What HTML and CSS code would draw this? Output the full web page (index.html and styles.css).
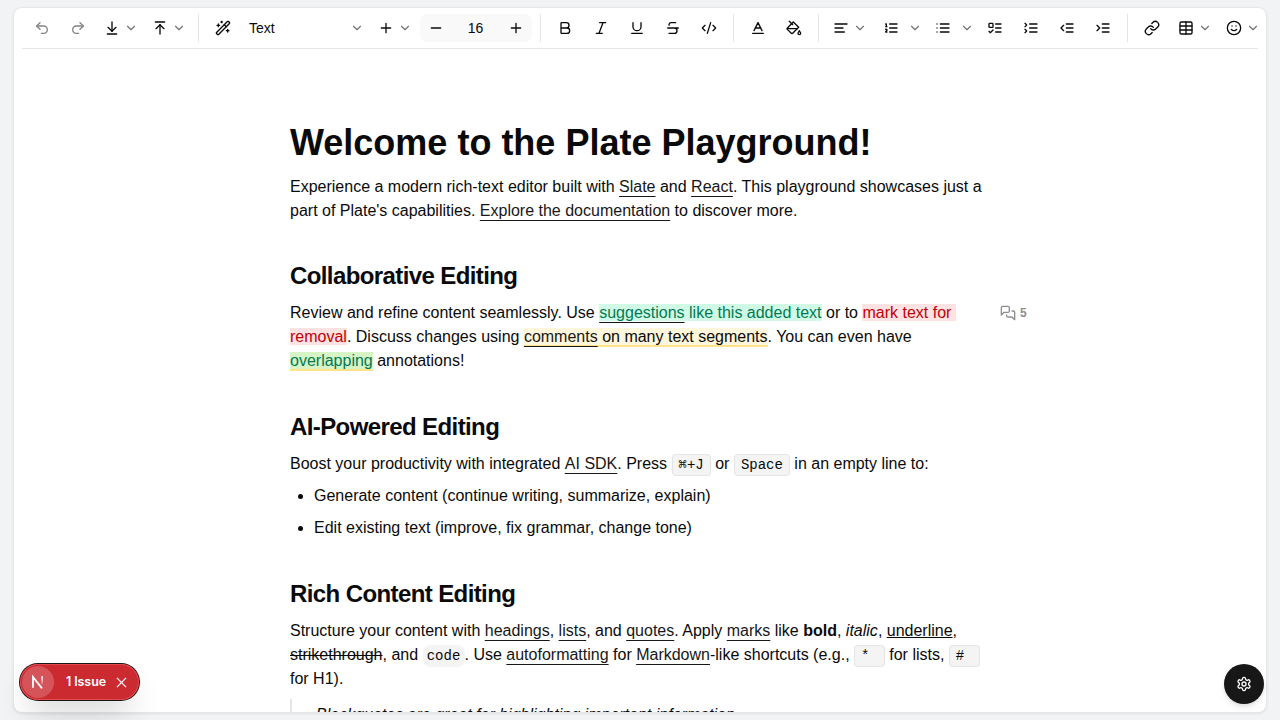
FILE: index.html
```
<!DOCTYPE html>
<html lang="en">
<head>
<meta charset="utf-8">
<title>Plate Playground</title>
<link rel="stylesheet" href="styles.css">
</head>
<body>
<svg class="sprite" aria-hidden="true">
  <symbol id="undo" viewBox="0 0 24 24"><path d="M9 14 4 9l5-5"/><path d="M4 9h10.5a5.5 5.5 0 0 1 0 11H11"/></symbol>
  <symbol id="redo" viewBox="0 0 24 24"><path d="m15 14 5-5-5-5"/><path d="M20 9H9.5a5.5 5.5 0 0 0 0 11H13"/></symbol>
  <symbol id="down-line" viewBox="0 0 24 24"><path d="M12 17V3"/><path d="m6 11 6 6 6-6"/><path d="M19 21H5"/></symbol>
  <symbol id="up-line" viewBox="0 0 24 24"><path d="M5 3h14"/><path d="m18 13-6-6-6 6"/><path d="M12 7v14"/></symbol>
  <symbol id="chevron" viewBox="0 0 24 24"><path d="m6 9 6 6 6-6"/></symbol>
  <symbol id="wand" viewBox="0 0 24 24"><path d="m21.64 3.64-1.28-1.28a1.21 1.21 0 0 0-1.72 0L2.36 18.64a1.21 1.21 0 0 0 0 1.72l1.28 1.28a1.2 1.2 0 0 0 1.72 0L21.64 5.36a1.2 1.2 0 0 0 0-1.72"/><path d="m14 7 3 3M5 6v4M19 14v4M10 2v2M7 8H3M21 16h-4M11 3H9"/></symbol>
  <symbol id="plus" viewBox="0 0 24 24"><path d="M5 12h14M12 5v14"/></symbol>
  <symbol id="minus" viewBox="0 0 24 24"><path d="M5 12h14"/></symbol>
  <symbol id="bold" viewBox="0 0 24 24"><path d="M6 12h9a4 4 0 0 1 0 8H7a1 1 0 0 1-1-1V5a1 1 0 0 1 1-1h7a4 4 0 0 1 0 8"/></symbol>
  <symbol id="italic" viewBox="0 0 24 24"><path d="M19 4h-9M14 20H5M15 4 9 20"/></symbol>
  <symbol id="underline" viewBox="0 0 24 24"><path d="M6 4v6a6 6 0 0 0 12 0V4M4 20h16"/></symbol>
  <symbol id="strike" viewBox="0 0 24 24"><path d="M16 4H9a3 3 0 0 0-2.83 4"/><path d="M14 12a4 4 0 0 1 0 8H6M4 12h16"/></symbol>
  <symbol id="code" viewBox="0 0 24 24"><path d="m18 16 4-4-4-4M6 8l-4 4 4 4M14.5 4l-5 16"/></symbol>
  <symbol id="baseline" viewBox="0 0 24 24"><path d="M4 20h16M6 16l6-12 6 12M8 12h8"/></symbol>
  <symbol id="bucket" viewBox="0 0 24 24"><path d="m19 11-8-8-8.6 8.6a2 2 0 0 0 0 2.8l5.2 5.2c.8.8 2 .8 2.8 0L19 11Z"/><path d="m5 2 5 5M2 13h15"/><path d="M22 20a2 2 0 1 1-4 0c0-1.6 1.7-2.4 2-4 .3 1.6 2 2.4 2 4Z"/></symbol>
  <symbol id="align" viewBox="0 0 24 24"><path d="M15 12H3M17 18H3M21 6H3"/></symbol>
  <symbol id="ordered" viewBox="0 0 24 24"><path d="M10 12h11M10 18h11M10 6h11M4 10h2M4 6h1v4M6 18H4c0-1 2-2 2-3s-1-1.5-2-1"/></symbol>
  <symbol id="list" viewBox="0 0 24 24"><path d="M3 12h.01M3 18h.01M3 6h.01M8 12h13M8 18h13M8 6h13"/></symbol>
  <symbol id="todo" viewBox="0 0 24 24"><rect x="3" y="5" width="6" height="6" rx="1"/><path d="m3 17 2 2 4-4M13 6h8M13 12h8M13 18h8"/></symbol>
  <symbol id="collapse" viewBox="0 0 24 24"><path d="m3 10 2.5-2.5L3 5M3 19l2.5-2.5L3 14M10 6h11M10 12h11M10 18h11"/></symbol>
  <symbol id="outdent" viewBox="0 0 24 24"><path d="M21 12H11M21 18H11M21 6H11M7 8l-4 4 4 4"/></symbol>
  <symbol id="indent" viewBox="0 0 24 24"><path d="M21 12H11M21 18H11M21 6H11M3 8l4 4-4 4"/></symbol>
  <symbol id="link" viewBox="0 0 24 24"><path d="M10 13a5 5 0 0 0 7.54.54l3-3a5 5 0 0 0-7.07-7.07l-1.72 1.71"/><path d="M14 11a5 5 0 0 0-7.54-.54l-3 3a5 5 0 0 0 7.07 7.07l1.71-1.71"/></symbol>
  <symbol id="table" viewBox="0 0 24 24"><path d="M12 3v18"/><rect x="3" y="3" width="18" height="18" rx="2"/><path d="M3 9h18M3 15h18"/></symbol>
  <symbol id="smile" viewBox="0 0 24 24"><circle cx="12" cy="12" r="10"/><path d="M8 14s1.5 2 4 2 4-2 4-2M9 9h.01M15 9h.01"/></symbol>
  <symbol id="messages" viewBox="0 0 24 24"><path d="M14 9a2 2 0 0 1-2 2H6l-4 4V4a2 2 0 0 1 2-2h8a2 2 0 0 1 2 2z"/><path d="M18 9h2a2 2 0 0 1 2 2v11l-4-4h-6a2 2 0 0 1-2-2v-1"/></symbol>
  <symbol id="settings" viewBox="0 0 24 24"><path d="M12.22 2h-.44a2 2 0 0 0-2 2v.18a2 2 0 0 1-1 1.73l-.43.25a2 2 0 0 1-2 0l-.15-.08a2 2 0 0 0-2.73.73l-.22.38a2 2 0 0 0 .73 2.73l.15.1a2 2 0 0 1 1 1.72v.51a2 2 0 0 1-1 1.74l-.15.09a2 2 0 0 0-.73 2.73l.22.38a2 2 0 0 0 2.73.73l.15-.08a2 2 0 0 1 2 0l.43.25a2 2 0 0 1 1 1.73V20a2 2 0 0 0 2 2h.44a2 2 0 0 0 2-2v-.18a2 2 0 0 1 1-1.73l.43-.25a2 2 0 0 1 2 0l.15.08a2 2 0 0 0 2.73-.73l.22-.39a2 2 0 0 0-.73-2.73l-.15-.08a2 2 0 0 1-1-1.74v-.5a2 2 0 0 1 1-1.74l.15-.09a2 2 0 0 0 .73-2.73l-.22-.38a2 2 0 0 0-2.73-.73l-.15.08a2 2 0 0 1-2 0l-.43-.25a2 2 0 0 1-1-1.73V4a2 2 0 0 0-2-2z"/><circle cx="12" cy="12" r="3"/></symbol>
</svg>
<main class="panel">
  <div class="toolbar">
    <div class="btn muted"><svg class="icon"><use href="#undo"/></svg></div>
    <div class="btn muted"><svg class="icon"><use href="#redo"/></svg></div>
    <div class="menu"><svg class="icon"><use href="#down-line"/></svg><svg class="chev"><use href="#chevron"/></svg></div>
    <div class="menu"><svg class="icon"><use href="#up-line"/></svg><svg class="chev"><use href="#chevron"/></svg></div>
    <div class="sep"></div>
    <div class="btn"><svg class="icon"><use href="#wand"/></svg></div>
    <div class="select"><span>Text</span><svg class="chev"><use href="#chevron"/></svg></div>
    <div class="menu"><svg class="icon"><use href="#plus"/></svg><svg class="chev"><use href="#chevron"/></svg></div>
    <div class="size"><svg class="icon"><use href="#minus"/></svg><span>16</span><svg class="icon"><use href="#plus"/></svg></div>
    <div class="sep"></div>
    <div class="btn"><svg class="icon"><use href="#bold"/></svg></div>
    <div class="btn"><svg class="icon"><use href="#italic"/></svg></div>
    <div class="btn"><svg class="icon"><use href="#underline"/></svg></div>
    <div class="btn"><svg class="icon"><use href="#strike"/></svg></div>
    <div class="btn"><svg class="icon"><use href="#code"/></svg></div>
    <div class="sep"></div>
    <div class="btn"><svg class="icon"><use href="#baseline"/></svg></div>
    <div class="btn"><svg class="icon"><use href="#bucket"/></svg></div>
    <div class="sep"></div>
    <div class="menu"><svg class="icon"><use href="#align"/></svg><svg class="chev"><use href="#chevron"/></svg></div>
    <div class="menu split"><svg class="icon"><use href="#ordered"/></svg><svg class="chev"><use href="#chevron"/></svg></div>
    <div class="menu split"><svg class="icon"><use href="#list"/></svg><svg class="chev"><use href="#chevron"/></svg></div>
    <div class="btn"><svg class="icon"><use href="#todo"/></svg></div>
    <div class="btn"><svg class="icon"><use href="#collapse"/></svg></div>
    <div class="btn"><svg class="icon"><use href="#outdent"/></svg></div>
    <div class="btn"><svg class="icon"><use href="#indent"/></svg></div>
    <div class="sep"></div>
    <div class="btn"><svg class="icon"><use href="#link"/></svg></div>
    <div class="menu"><svg class="icon"><use href="#table"/></svg><svg class="chev"><use href="#chevron"/></svg></div>
    <div class="menu"><svg class="icon"><use href="#smile"/></svg><svg class="chev"><use href="#chevron"/></svg></div>
  </div>
  <article class="editor">
    <h1>Welcome to the Plate Playground!</h1>
    <p>Experience a modern rich-text editor built with <a>Slate</a> and <a>React</a>. This playground showcases just a part of Plate's capabilities. <a>Explore the documentation</a> to discover more.</p>
    <h2>Collaborative Editing</h2>
    <div class="commented">
      <p>Review and refine content seamlessly. Use <span class="added"><a>suggestions</a> like this added text</span> or to <span class="removed">mark text for removal</span>. Discuss changes using <span class="comment"><a>comments</a> on many text segments</span>. You can even have <span class="overlap">overlapping</span> annotations!</p>
      <div class="thread"><svg class="icon"><use href="#messages"/></svg><span>5</span></div>
    </div>
    <h2>AI-Powered Editing</h2>
    <p>Boost your productivity with integrated <a class="block">AI SDK</a>. Press <kbd>⌘+J</kbd> or <kbd>Space</kbd> in an empty line to:</p>
    <ul>
      <li>Generate content (continue writing, summarize, explain)</li>
      <li>Edit existing text (improve, fix grammar, change tone)</li>
    </ul>
    <h2>Rich Content Editing</h2>
    <p>Structure your content with <a>headings</a>, <a>lists</a>, and <a>quotes</a>. Apply <a>marks</a> like <strong>bold</strong>, <em>italic</em>, <u>underline</u>, <s>strikethrough</s>, and <code>code</code>. Use <a>autoformatting</a> for <a>Markdown</a>-like shortcuts (e.g., <kbd>* </kbd> for lists, <kbd># </kbd> for H1).</p>
    <blockquote>Blockquotes are great for highlighting important information.</blockquote>
  </article>
</main>
<div class="issues">
  <div class="mark"><svg class="logo" viewBox="0 0 18 18"><defs><linearGradient id="fade" x1="0" y1="0" x2="0" y2="1"><stop offset="0" stop-color="#fff"/><stop offset="1" stop-color="#fff" stop-opacity="0"/></linearGradient></defs><path d="M4 14.8V4l9 11.4" fill="none" stroke="#fff" stroke-width="1.8"/><rect x="12.2" y="3.2" width="1.8" height="9.4" fill="url(#fade)"/></svg></div>
  <span>1 Issue</span>
  <svg class="close" viewBox="0 0 12 12"><path d="m1 1 10 10M11 1 1 11"/></svg>
</div>
<div class="gear"><svg class="icon"><use href="#settings"/></svg></div>
</body>
</html>
```
FILE: styles.css
```
* { box-sizing: border-box; }
body {
  margin: 0;
  height: 720px;
  padding: 8px 14px;
  overflow: hidden;
  background: #f2f3f5;
  color: #0a0a0a;
  font: 16px/24px "Liberation Sans", Arial, sans-serif;
}
.sprite { display: none; }
.panel {
  height: 704px;
  overflow: hidden;
  background: #fff;
  border-radius: 8px;
  box-shadow: 0 0 0 1px #e5e7ea, 0 1px 3px 1px rgba(0, 0, 0, .08);
}
.toolbar {
  display: flex;
  align-items: center;
  height: 41px;
  margin: 0 8px;
  padding-left: 2px;
  border-bottom: 1px solid #e5e5e5;
  font-size: 14px;
}
.toolbar > * { flex: none; }
.icon, .chev {
  display: block;
  flex: none;
  width: 16px;
  height: 16px;
  fill: none;
  stroke: currentColor;
  stroke-width: 2;
  stroke-linecap: round;
  stroke-linejoin: round;
}
.chev { width: 14px; height: 14px; color: #737373; }
.btn { display: flex; justify-content: center; width: 36px; }
.muted { opacity: .5; }
.menu { display: flex; align-items: center; gap: 4px; width: 48px; padding-left: 8px; }
.split { width: 52px; padding-left: 10px; gap: 9px; }
.sep { width: 1px; height: 28px; margin: 0 6px; background: #e5e5e5; }
.select { display: flex; align-items: center; justify-content: space-between; width: 129px; padding: 0 6px 0 8px; }
.size {
  display: flex;
  align-items: center;
  justify-content: space-between;
  width: 112px;
  height: 28px;
  margin: 0 2px;
  padding: 0 8px;
  border-radius: 7px;
  background: #f9f9f9;
}
.size span { padding-right: 1px; }
.editor { width: 700px; margin: 0 auto; padding-top: 74px; }
h1 { margin: 0; font-size: 36px; line-height: 40px; padding-bottom: 7.8px; }
h2 { margin: 33.6px 0 5px; font-size: 24px; line-height: 32px; letter-spacing: -.6px; }
p { margin: 0; padding: 4px 0; white-space: pre-wrap; }
.editor a { text-decoration: underline 1px; text-underline-offset: 4px; text-decoration-skip-ink: none; color: #171717; }
.editor .block { display: inline-block; }
.commented { position: relative; }
.thread {
  position: absolute;
  left: 710px;
  top: 4px;
  display: flex;
  align-items: center;
  gap: 4px;
  color: #8e8e8e;
  font-size: 12px;
  font-weight: 700;
}
.added { background: #d0fae5; color: #007a55; }
.editor .added a { color: inherit; text-decoration-color: #171717; }
.removed { background: #ffe2e2; color: #c10007; }
.comment { background: #fff6db; border-bottom: 2px solid #ffe28a; }
.overlap { background: #d6f4c5; color: #007a55; border-bottom: 2px solid #ffe28a; }
kbd, code { font-family: "Liberation Mono", monospace; font-size: 14px; line-height: 16px; white-space: pre-wrap; background: #f4f4f4; }
kbd { padding: 2px 6px; border: 1px solid #e5e5e5; border-radius: 4px; }
code { padding: 3px 4.2px; border-radius: 8px; }
ul { margin: 0; padding-left: 24px; }
li { padding: 4px 0; }
blockquote { margin: 4px 0; padding: 4px 0 4px 24px; border-left: 2px solid #e5e5e5; font-style: italic; }
.issues {
  position: absolute;
  left: 20px;
  top: 664px;
  display: flex;
  align-items: center;
  width: 119px;
  height: 36px;
  padding-left: 2px;
  border-radius: 18px;
  background: #ca2a30;
  color: #fff;
  font: 600 12.5px/16px Inter, sans-serif;
  letter-spacing: -.1px;
  box-shadow: 0 0 0 1px #171717, inset 0 0 0 1px #e5484d, 0 16px 32px -8px rgba(0, 0, 0, .24);
}
.mark { display: flex; align-items: center; justify-content: center; width: 32px; height: 32px; margin-right: 12px; border-radius: 50%; background: #d55459; }
.logo { width: 18px; height: 18px; }
.issues span { width: 41px; white-space: nowrap; }
.close { width: 11px; height: 11px; margin-left: 9px; fill: none; stroke: #fff; stroke-width: 1.4; }
.gear {
  position: absolute;
  left: 1224px;
  top: 664px;
  display: flex;
  align-items: center;
  justify-content: center;
  width: 40px;
  height: 40px;
  border-radius: 50%;
  background: #171717;
  color: #fafafa;
  box-shadow: 0 4px 6px -1px rgba(0, 0, 0, .1), 0 2px 4px -2px rgba(0, 0, 0, .1);
}
```
